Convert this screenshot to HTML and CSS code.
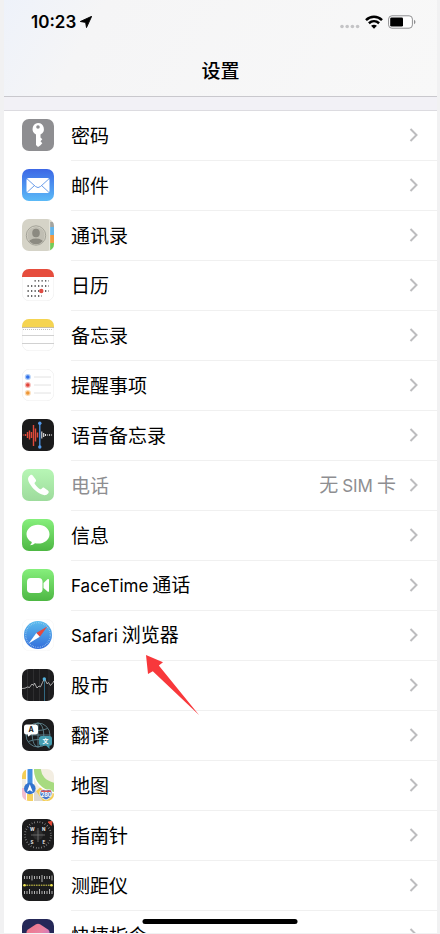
FILE: index.html
```html
<!DOCTYPE html>
<html lang="zh-CN">
<head>
<meta charset="utf-8">
<meta name="viewport" content="width=device-width, initial-scale=1">
<title>设置</title>
<link rel="stylesheet" href="styles.css">
</head>
<body>
<div class="phone">
  <header class="header">
    <div class="status">
      <div class="clock">
        <span>10:23</span>
        <svg width="12" height="12" viewBox="0 0 12 12" aria-hidden="true"><path d="M11.700.3 6.500 11.600 5.600 6.400.3 5.500z" fill="#000" stroke="#000" stroke-width=".9" stroke-linejoin="round"/></svg>
      </div>
      <div class="signals">
        <svg class="dots" width="20" height="5" viewBox="0 0 20 5" aria-hidden="true"><g fill="#c4c4c6"><circle cx="2" cy="2.5" r="1.8"/><circle cx="7.2" cy="2.5" r="1.8"/><circle cx="12.4" cy="2.5" r="1.8"/><circle cx="17.6" cy="2.5" r="1.8"/></g></svg>
        <svg width="18" height="14" viewBox="0 0 18 14" aria-hidden="true"><g fill="none" stroke="#000" stroke-width="2.5"><path d="M1 5.100C5.500.7 12.500.7 17 5.100"/><path d="M3.900 8.300c3-2.700 7.200-2.700 10.200 0"/></g><path d="M9 13.700 6.100 10.800c1.700-1.500 4.100-1.500 5.800 0z"/></svg>
        <svg width="28" height="14" viewBox="0 0 28 14" aria-hidden="true"><rect x=".6" y=".8" width="23.800" height="12.400" rx="3.300" fill="#fff" stroke="#8e8e90"/><rect x="2.200" y="2.500" width="12.800" height="9" rx="1.300"/><path d="M26 4.800c2 .8 2 3.600 0 4.400z" fill="#8e8e90"/></svg>
      </div>
    </div>
    <h1 class="title">设置</h1>
  </header>
  <main class="content">
    <nav class="list" aria-label="设置">
      <a class="row" href="#passwords">
        <svg class="icon" viewBox="0 0 32 32" aria-hidden="true"><rect width="32" height="32" rx="7" fill="#8e8e91"/><path fill="#fff" fill-rule="evenodd" d="M16 4a6 6 0 0 1 2.500 11.400v3l1.800 1.800-1.800 2 1.800 2-1.800 2L16 28l-2-2V15.400A6 6 0 0 1 16 4zm0 2.200a1.800 1.800 0 1 0 0 3.600 1.800 1.800 0 0 0 0-3.600z"/></svg>
        <span class="cell"><span class="label">密码</span><svg class="chevron" viewBox="0 0 9 14" aria-hidden="true"><path d="m1.500 1 6 6-6 6"/></svg></span>
      </a>
      <a class="row" href="#mail">
        <svg class="icon" viewBox="0 0 32 32" aria-hidden="true"><defs><linearGradient id="mail" x2="0" y2="1"><stop stop-color="#3c67e6"/><stop offset="1" stop-color="#5bbaf7"/></linearGradient></defs><rect width="32" height="32" rx="7" fill="url(#mail)"/><rect x="4.500" y="9" width="23" height="15" rx="2" fill="#fff"/><path d="m5 9.800 8.500 7.700q2.500 2.200 5 0L27 9.800M5.200 23.200l7.300-6.700m14.300 6.700-7.300-6.700" fill="none" stroke="#5c94e8" stroke-width=".9"/></svg>
        <span class="cell"><span class="label">邮件</span><svg class="chevron" viewBox="0 0 9 14" aria-hidden="true"><path d="m1.500 1 6 6-6 6"/></svg></span>
      </a>
      <a class="row" href="#contacts">
        <svg class="icon" viewBox="0 0 32 32" aria-hidden="true"><defs><clipPath id="tile"><rect width="32" height="32" rx="7"/></clipPath><clipPath id="sheet"><path d="M7 0h25v31q-2 1-4 1H7a7 7 0 0 1-7-7V7a7 7 0 0 1 7-7z"/></clipPath><clipPath id="face"><circle cx="14" cy="16.500" r="8.800"/></clipPath></defs><g clip-path="url(#tile)"><path fill="#d5d3c7" d="M0 0h32v32H0z"/><path fill="#a4a49f" d="M28 3h4v5h-4z"/><path fill="#64b5ea" d="M28 8h4v8h-4z"/><path fill="#f19a42" d="M28 16h4v8h-4z"/><path fill="#72cc58" d="M28 24h4v8h-4z"/><path d="M27.700 0v32" stroke="#eeeee4" stroke-width=".8"/></g><circle cx="14" cy="16.500" r="9.700" fill="none" stroke="#9d9c92" stroke-width=".9"/><g clip-path="url(#face)"><circle cx="14" cy="16.500" r="8.800" fill="#c0beb3"/><g fill="#8c8a81"><ellipse cx="14" cy="14" rx="3.800" ry="4.300"/><ellipse cx="14" cy="24.500" rx="8" ry="5"/></g></g></svg>
        <span class="cell"><span class="label">通讯录</span><svg class="chevron" viewBox="0 0 9 14" aria-hidden="true"><path d="m1.500 1 6 6-6 6"/></svg></span>
      </a>
      <a class="row" href="#calendar">
        <svg class="icon" viewBox="0 0 32 32" aria-hidden="true"><rect x=".25" y=".25" width="31.500" height="31.500" rx="7" fill="#fff" stroke="#e6e6e6" stroke-width=".5"/><path d="M0 8V7a7 7 0 0 1 7-7h18a7 7 0 0 1 7 7v1z" fill="#e64d3d"/><g stroke="#333" stroke-width="1.300" stroke-dasharray="1.300 2.200"><path d="M12.500 11.800H27M5.500 17H27M5.500 22H27M5.500 27H20"/></g><circle cx="19.300" cy="22" r="2.200" fill="#df4b43"/></svg>
        <span class="cell"><span class="label">日历</span><svg class="chevron" viewBox="0 0 9 14" aria-hidden="true"><path d="m1.500 1 6 6-6 6"/></svg></span>
      </a>
      <a class="row" href="#notes">
        <svg class="icon" viewBox="0 0 32 32" aria-hidden="true"><rect x=".25" y=".25" width="31.500" height="31.500" rx="7" fill="#fff" stroke="#e6e6e6" stroke-width=".5"/><path d="M0 8V7a7 7 0 0 1 7-7h18a7 7 0 0 1 7 7v1z" fill="#f5d451"/><path d="M0 8.500h32" stroke="#c8bea4"/><path d="M1 10.500h30" stroke="#bbb" stroke-width=".9" stroke-dasharray="1 1"/><path d="M0 16.500h32M0 24.500h32" stroke="#ccc" stroke-width=".9"/></svg>
        <span class="cell"><span class="label">备忘录</span><svg class="chevron" viewBox="0 0 9 14" aria-hidden="true"><path d="m1.500 1 6 6-6 6"/></svg></span>
      </a>
      <a class="row" href="#reminders">
        <svg class="icon" viewBox="0 0 32 32" aria-hidden="true"><rect x=".25" y=".25" width="31.500" height="31.500" rx="7" fill="#fff" stroke="#e6e6e6" stroke-width=".5"/><g fill-opacity=".4"><circle cx="5.800" cy="8" r="3" fill="#2f7de9"/><circle cx="5.800" cy="16" r="3" fill="#e8483e"/><circle cx="5.800" cy="24" r="3" fill="#f2a03d"/></g><circle cx="5.800" cy="8" r="1.800" fill="#2f6fe9"/><circle cx="5.800" cy="16" r="1.800" fill="#e0443a"/><circle cx="5.800" cy="24" r="1.800" fill="#ee9636"/><path d="M12 8h17M12 16h17M12 24h17" stroke="#dadada" stroke-width=".8"/></svg>
        <span class="cell"><span class="label">提醒事项</span><svg class="chevron" viewBox="0 0 9 14" aria-hidden="true"><path d="m1.500 1 6 6-6 6"/></svg></span>
      </a>
      <a class="row" href="#voice-memos">
        <svg class="icon" viewBox="0 0 32 32" aria-hidden="true"><rect width="32" height="32" rx="7" fill="#1b1b1c"/><g stroke="#e04a3b" stroke-width="1.400"><path d="M1.500 15.500v1M3.500 15v2M5.500 13v6M7.500 11.500v9M9.500 13v6M11.500 6v21M13.500 9.500v13M15.500 13.500v5"/></g><g stroke="#e8e8e8" stroke-width="1.100"><path d="M19.800 12.500v7M21.700 14v4M23.500 15v2M25.500 15.500v1M27.500 15.200v1.600M29.500 15.500v1"/></g><path d="M17.800 4v24" stroke="#4c93e6" stroke-width="1.300"/><g fill="#559cec"><circle cx="17.800" cy="4.300" r="1.700"/><circle cx="17.800" cy="28" r="1.700"/></g></svg>
        <span class="cell"><span class="label">语音备忘录</span><svg class="chevron" viewBox="0 0 9 14" aria-hidden="true"><path d="m1.500 1 6 6-6 6"/></svg></span>
      </a>
      <a class="row" href="#phone">
        <svg class="icon" viewBox="0 0 32 32" aria-hidden="true"><defs><linearGradient id="call" x2="0" y2="1"><stop stop-color="#b7f6b5"/><stop offset="1" stop-color="#9ddb9c"/></linearGradient></defs><rect width="32" height="32" rx="7" fill="url(#call)"/><path d="M8.200 6.300c1-.8 2-.5 2.700.5l2.800 3.700c.7 1 .4 1.800-.4 2.500-.9.800-.9 1.400-.3 2.300 1.300 1.900 2.800 3.400 4.700 4.600.9.500 1.500.4 2.200-.5.700-.9 1.600-1 2.500-.4l3.500 2.600c.9.700 1.100 1.700.4 2.600-1.700 2.300-4.300 2.400-7 1.100C13.800 22.700 8.900 17.800 6.600 12.500c-1.100-2.600-.6-4.800 1.600-6.200z" fill="#fff"/></svg>
        <span class="cell"><span class="label muted">电话</span><span class="value muted">无<span class="latin latin-mid">SIM</span>卡</span><svg class="chevron" viewBox="0 0 9 14" aria-hidden="true"><path d="m1.500 1 6 6-6 6"/></svg></span>
      </a>
      <a class="row" href="#messages">
        <svg class="icon" viewBox="0 0 32 32" aria-hidden="true"><defs><linearGradient id="green" x2="0" y2="1"><stop stop-color="#86ef7c"/><stop offset="1" stop-color="#4db743"/></linearGradient></defs><rect width="32" height="32" rx="7" fill="url(#green)"/><path d="M16 5.700c6.500 0 11.500 4.200 11.500 9.500S22.500 24.600 16 24.600c-1 0-2-.1-3-.3-1.300 1.200-2.900 1.900-5 2 1-.8 1.700-1.900 1.800-3.200-3.200-1.600-5.300-4.500-5.300-7.900 0-5.300 5-9.500 11.500-9.500z" fill="#fff"/></svg>
        <span class="cell"><span class="label">信息</span><svg class="chevron" viewBox="0 0 9 14" aria-hidden="true"><path d="m1.500 1 6 6-6 6"/></svg></span>
      </a>
      <a class="row" href="#facetime">
        <svg class="icon" viewBox="0 0 32 32" aria-hidden="true"><rect width="32" height="32" rx="7" fill="url(#green)"/><rect x="5" y="9" width="15.500" height="15" rx="3.800" fill="#fff"/><path d="m21.500 14 4-3.700c.7-.6 1.500-.4 1.500.6v11c0 1-.8 1.200-1.500.6l-4-3.600z" fill="#fff"/></svg>
        <span class="cell"><span class="label"><span class="latin latin-lead">FaceTime</span>通话</span><svg class="chevron" viewBox="0 0 9 14" aria-hidden="true"><path d="m1.500 1 6 6-6 6"/></svg></span>
      </a>
      <a class="row" href="#safari">
        <svg class="icon" viewBox="0 0 32 32" aria-hidden="true"><defs><linearGradient id="safari" x2="0" y2="1"><stop stop-color="#5bbcee"/><stop offset="1" stop-color="#346edb"/></linearGradient></defs><rect x=".25" y=".25" width="31.500" height="31.500" rx="7" fill="#fff" stroke="#f3f3f3" stroke-width=".5"/><circle cx="16" cy="16" r="14" fill="url(#safari)"/><circle cx="16" cy="16" r="12.300" fill="none" stroke="#b9dcf7" stroke-width="1.200" stroke-dasharray=".5 1.300"/><path d="M25.300 7.500 14.300 14l3.500 3.800z" fill="#e5483f"/><path d="m6.700 24.500 7.600-10.500 3.500 3.800z" fill="#fff"/></svg>
        <span class="cell"><span class="label"><span class="latin latin-lead">Safari</span>浏览器</span><svg class="chevron" viewBox="0 0 9 14" aria-hidden="true"><path d="m1.500 1 6 6-6 6"/></svg></span>
        <svg class="pointer" viewBox="0 0 54 61" aria-hidden="true"><path d="M0 0 17 7.200l-4.200 3.300L53 60 6.800 16.300 2 19z" fill="#f8383b"/></svg>
      </a>
      <a class="row" href="#stocks">
        <svg class="icon" viewBox="0 0 32 32" aria-hidden="true"><rect width="32" height="32" rx="7" fill="#1c1c1e"/><path d="M5.500 1v30M11.500 0v32M17.500 0v32M27 1v30" stroke="#3b3b3d" stroke-width=".6"/><path d="M22.500 10v22" stroke="#397c9a" stroke-width=".8"/><path d="m0 19.500 3-.3 2.500-1.200 2 .5L10 15l1.500 1.500L12.500 14l2.500 5 2-2 1.500.8 2-4.300 2-4 2.500 5.300 1.500-1.300 2 3 3-3.500V12" fill="none" stroke="#ccc" stroke-width=".8"/><circle cx="22.300" cy="10" r="1.700" fill="#54b3df"/></svg>
        <span class="cell"><span class="label">股市</span><svg class="chevron" viewBox="0 0 9 14" aria-hidden="true"><path d="m1.500 1 6 6-6 6"/></svg></span>
      </a>
      <a class="row" href="#translate">
        <svg class="icon" viewBox="0 0 32 32" aria-hidden="true"><rect width="32" height="32" rx="7" fill="#1c1c1e"/><g fill="none" stroke="#668f9c" stroke-width=".8"><circle cx="16" cy="16" r="12"/><ellipse cx="16" cy="16" rx="5.800" ry="12"/><path d="M4 16h24M16 4v24M6.500 9.500q9.500 4 19 0M6.500 22.500q9.500-4 19 0"/></g><path d="M4.500 5.500h9A2.500 2.500 0 0 1 16 8v5a2.500 2.500 0 0 1-2.500 2.500H9l-3 2.300v-2.300H4.500A2.500 2.500 0 0 1 2 13V8a2.500 2.500 0 0 1 2.500-2.500z" fill="#fff"/><path d="M19.500 17h8a2.500 2.500 0 0 1 2.500 2.500v4.700a2.500 2.500 0 0 1-2.500 2.500V30l-3.300-3.300h-4.700a2.500 2.500 0 0 1-2.500-2.500v-4.700a2.500 2.500 0 0 1 2.500-2.500z" fill="#459caf"/><text class="glyph" x="6.500" y="13.200" font-size="7" fill="#222">A</text><text class="glyph" x="20.500" y="24.300" font-size="6" fill="#fff">文</text></svg>
        <span class="cell"><span class="label">翻译</span><svg class="chevron" viewBox="0 0 9 14" aria-hidden="true"><path d="m1.500 1 6 6-6 6"/></svg></span>
      </a>
      <a class="row" href="#maps">
        <svg class="icon" viewBox="0 0 32 32" aria-hidden="true"><g clip-path="url(#tile)"><path fill="#f3eee2" d="M0 0h32v32H0z"/><path fill="#f4ce55" d="M0 0h4v10H0zM11 25 23 14l9 8v10H11z"/><path fill="#f3bdd0" d="M0 19h5v13H0z"/><path d="M14-4C14 9 20 17 36 19" fill="none" stroke="#a7db80" stroke-width="9"/><path d="M11-2c0 15 8 24 23 26" fill="none" stroke="#fff" stroke-width="1.500"/><path fill="#fff" d="M4 0h8v32H4z"/><path fill="#438ee0" d="M5.500 0h5v20h-5z"/><path fill="#f5d160" d="M5 25h6v7H5z"/><path fill="#ddd8cf" d="m12 19 9 13h-9z"/></g><circle cx="7.800" cy="19.500" r="5.800" fill="#3474ce"/><path d="m7.800 15.300 3 7.600-3-1.700-3 1.700z" fill="#fff"/><path d="m18.500 21.500 3-1 2.500.8 2.500-.8 3 1c1.500 4 .4 7-5.500 9.500-5.900-2.500-7-5.500-5.500-9.500z" fill="#4777c9" stroke="#fff" stroke-width=".8"/><path d="M19 22.300h10" stroke="#d95151" stroke-width="1.600"/><text class="glyph" x="18.800" y="28" font-size="5.500" fill="#fff">280</text></svg>
        <span class="cell"><span class="label">地图</span><svg class="chevron" viewBox="0 0 9 14" aria-hidden="true"><path d="m1.500 1 6 6-6 6"/></svg></span>
      </a>
      <a class="row" href="#compass">
        <svg class="icon" viewBox="0 0 32 32" aria-hidden="true"><rect width="32" height="32" rx="7" fill="#1b1b1c"/><circle cx="16" cy="16" r="13" fill="none" stroke="#a5a5a5" stroke-width="1.800" stroke-dasharray=".6 2.120"/><circle cx="16" cy="16" r="5" fill="#2b2b2c"/><path d="M9 16h14M16 9v14" stroke="#777" stroke-width=".8"/><path d="m26 3 4-.5-.7 4z" fill="#e44b38" stroke="#e44b38"/><g class="glyph" font-size="4.500" fill="#eee"><text x="8" y="12">W</text><text x="20" y="12">N</text><text x="8.500" y="24.500">S</text><text x="20.500" y="24.500">E</text></g></svg>
        <span class="cell"><span class="label">指南针</span><svg class="chevron" viewBox="0 0 9 14" aria-hidden="true"><path d="m1.500 1 6 6-6 6"/></svg></span>
      </a>
      <a class="row" href="#measure">
        <svg class="icon" viewBox="0 0 32 32" aria-hidden="true"><rect width="32" height="32" rx="7" fill="#1c1c1d"/><g stroke="#c5c5c5" stroke-width=".9"><path d="M2.500 7v3M5 7v3M7.500 7v3M10 6.500v5M12.500 7v3M15 7v3M17.500 7v3M20 6v7M22.500 7v3M25 7v3M27.500 7v3M30 6.500v5M2.500 22v3M5 22v3M7.500 20v5M10 22v3M12.500 22v3M15 22v3M17.500 20v5M20 22v3M22.500 22v3M25 22v3M27.500 20v5M30 22v3"/></g><path d="M2 16.200h28" stroke="#e3d94b" stroke-dasharray="1.600 .8"/><g fill="#f0e653"><circle cx="2.500" cy="16.200" r="1.300"/><circle cx="29.500" cy="16.200" r="1.300"/></g></svg>
        <span class="cell"><span class="label">测距仪</span><svg class="chevron" viewBox="0 0 9 14" aria-hidden="true"><path d="m1.500 1 6 6-6 6"/></svg></span>
      </a>
      <a class="row" href="#shortcuts">
        <svg class="icon" viewBox="0 0 32 32" aria-hidden="true"><defs><linearGradient id="gem" x2="1" y2="1"><stop stop-color="#ef7380"/><stop offset=".5" stop-color="#e983a5"/><stop offset="1" stop-color="#a56ae5"/></linearGradient></defs><rect width="32" height="32" rx="7" fill="#252858"/><path d="M14 5.200q2-1 4 0l8 5.200q1.500 1 1.500 2.600v7q0 1.500-1.500 2.500l-8 5q-2 1-4 0l-8-5Q4.500 21.500 4.500 20v-7q0-1.600 1.500-2.600z" fill="url(#gem)"/></svg>
        <span class="cell"><span class="label">快捷指令</span><svg class="chevron" viewBox="0 0 9 14" aria-hidden="true"><path d="m1.500 1 6 6-6 6"/></svg></span>
      </a>
    </nav>
  </main>
  <div class="home-indicator"></div>
</div>
</body>
</html>
```
FILE: styles.css
```css
* {
  box-sizing: border-box;
}

body {
  margin: 0;
  background: #f1f1f2;
  color: #000;
  font-family: "Noto Sans CJK SC", sans-serif;
}

.phone {
  position: relative;
  display: flex;
  flex-direction: column;
  height: 100vh;
  padding: 0 3px 1px 4px;
  overflow: hidden;
}

.header {
  flex: none;
  padding-bottom: 12px;
  border-bottom: 1px solid #c9c8cd;
  background: linear-gradient(120deg, #eef2fa 0, #f5f5f6 90px, #f8f8f8 100%);
}

.status {
  display: flex;
  align-items: center;
  justify-content: space-between;
  height: 44px;
  padding: 0 21px 0 27px;
}

.clock {
  display: flex;
  align-items: center;
  gap: 4px;
  font: 600 17px/20px Inter, sans-serif;
}

.signals {
  display: flex;
  align-items: center;
  gap: 5px;
}

.dots {
  align-self: flex-end;
}

.title {
  margin: 0;
  padding-top: 12px;
  font-size: 19px;
  font-weight: 500;
  line-height: 28px;
  text-align: center;
}

.content {
  flex: 1;
  min-height: 0;
  padding-top: 13px;
  overflow: hidden;
  background: #f2f1f6;
}

.list {
  border-top: 1px solid #dcdbe0;
  background: #fff;
}

.row {
  position: relative;
  display: flex;
  align-items: center;
  gap: 17px;
  height: 50px;
  padding-left: 18px;
  color: inherit;
  text-decoration: none;
}

.icon {
  flex: none;
  width: 32px;
  height: 32px;
  margin-bottom: 2px;
}

.cell {
  display: flex;
  flex: 1;
  align-items: center;
  align-self: stretch;
  gap: 13px;
  padding: 0 19px 1px 0;
  border-bottom: 1px solid #f0f0f0;
  font-size: 19px;
  line-height: 28px;
}

.label {
  flex: 1;
}

.latin {
  font-family: Inter, sans-serif;
  font-size: 17px;
}

.latin-lead {
  margin-right: 4px;
}

.latin-mid {
  margin: 0 4px;
}

.muted {
  color: #8e8e91;
}

.chevron {
  flex: none;
  width: 9px;
  height: 14px;
  fill: none;
  stroke: #bdbdbf;
  stroke-width: 2;
}

.pointer {
  position: absolute;
  top: 44px;
  left: 142px;
  z-index: 1;
  width: 54px;
  height: 61px;
}

.glyph {
  font-family: Inter, "Noto Sans CJK SC", sans-serif;
  font-weight: 700;
}

.home-indicator {
  position: absolute;
  bottom: 10px;
  left: 50%;
  width: 155px;
  height: 5px;
  border-radius: 3px;
  background: #000;
  transform: translateX(-50%);
}
```
